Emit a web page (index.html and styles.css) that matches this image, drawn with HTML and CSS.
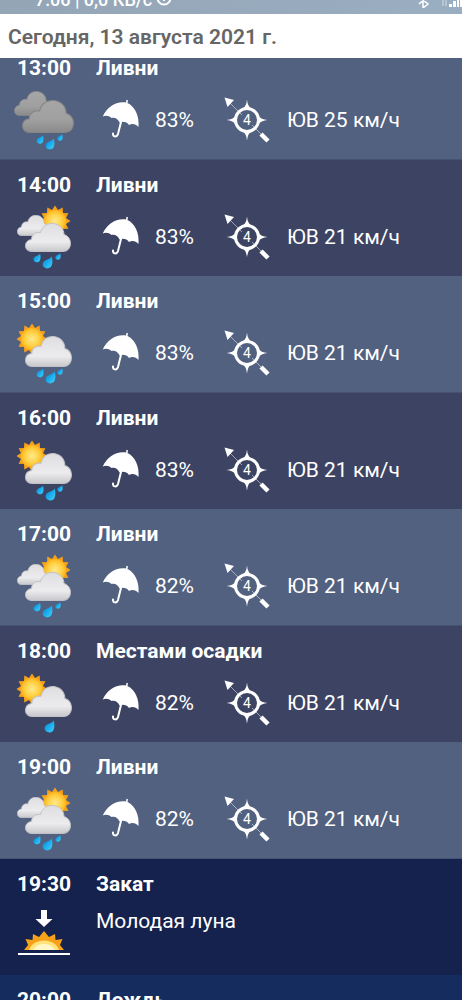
FILE: index.html
```html
<!DOCTYPE html>
<html lang="ru">
<head>
    <meta charset="UTF-8">
    <meta name="viewport" content="width=device-width, initial-scale=1.0">
    <title>Почасовой прогноз</title>
    <link rel="stylesheet" href="styles.css">
</head>
<body>

    <svg class="sprite" aria-hidden="true">
        <defs>
            <linearGradient id="cloudFill" x1="0" y1="0" x2="0" y2="1">
                <stop offset="0" stop-color="#dedee1"/>
                <stop offset="0.65" stop-color="#ececee"/>
                <stop offset="1" stop-color="#c8c8cc"/>
            </linearGradient>
            <linearGradient id="greyFill" x1="0" y1="0" x2="0" y2="1">
                <stop offset="0" stop-color="#a6a6a6"/>
                <stop offset="0.6" stop-color="#a0a0a0"/>
                <stop offset="1" stop-color="#8a8a8a"/>
            </linearGradient>
            <radialGradient id="sunFill">
                <stop offset="0" stop-color="#ffe98c"/>
                <stop offset="0.6" stop-color="#ffd34a"/>
                <stop offset="1" stop-color="#fdb51c"/>
            </radialGradient>
            <linearGradient id="dropFill" x1="0" y1="0" x2="1" y2="1">
                <stop offset="0" stop-color="#1272b4"/>
                <stop offset="0.4" stop-color="#13a5ea"/>
                <stop offset="1" stop-color="#45d2fb"/>
            </linearGradient>
        </defs>
        <symbol id="cloud" viewBox="0 0 46 30" preserveAspectRatio="none">
            <path d="M7 29.5C3 29.5 .5 27 .5 23.5C.5 20 3 17.500 6.500 17C6.500 12 11 9 15.500 10C17 4 21 .5 27 .5C34 .5 39 5.500 39 12C43 13 45.500 17 45.500 21C45.500 26 42.500 29.500 38 29.500Z"/>
        </symbol>
        <symbol id="sun" viewBox="-16 -16 32 32">
            <path fill="#f7a11b" d="M0-15.500L3-11L7.700-13.400L8-8L13.400-7.700L11-3L15.500 0L11 3L13.400 7.700L8 8L7.700 13.400L3 11L0 15.500L-3 11L-7.700 13.400L-8 8L-13.400 7.700L-11 3L-15.500 0L-11-3L-13.400-7.700L-8-8L-7.700-13.400L-3-11Z"/>
            <circle r="11" fill="url(#sunFill)"/>
        </symbol>
        <symbol id="drop" viewBox="0 0 12 14">
            <path fill="url(#dropFill)" d="M10.500 .5C12 5 11.500 9 10 11.500C8 14 4 14 2 12C0 9.500 .5 6.500 3 5C6 3.500 9 3 10.500 .5Z"/>
        </symbol>

        <symbol id="dark-showers" viewBox="0 0 72 68">
            <use href="#cloud" class="cloud-grey" x="6" y="5" width="38" height="25"/>
            <use href="#cloud" class="cloud-grey" x="14" y="14" width="52" height="33"/>
            <use href="#drop" x="28" y="49" width="8" height="9"/>
            <use href="#drop" x="37" y="52" width="10" height="12"/>
            <use href="#drop" x="49" y="48" width="6" height="7"/>
        </symbol>
        <symbol id="cloudy-showers" viewBox="0 0 72 68">
            <use href="#sun" x="31" y="2" width="32" height="32"/>
            <use href="#cloud" class="cloud-white" x="9" y="12" width="32" height="21"/>
            <use href="#cloud" class="cloud-white" x="17" y="20" width="46" height="29"/>
            <use href="#drop" x="25" y="50" width="8" height="10"/>
            <use href="#drop" x="34" y="53" width="11" height="13"/>
            <use href="#drop" x="47" y="50" width="6" height="7"/>
        </symbol>
        <symbol id="sunny-showers" viewBox="0 0 72 68">
            <use href="#sun" x="8" y="4" width="32" height="32"/>
            <use href="#cloud" class="cloud-white" x="17" y="17" width="47" height="31"/>
            <use href="#drop" x="28" y="49" width="8" height="10"/>
            <use href="#drop" x="37" y="52" width="11" height="13"/>
            <use href="#drop" x="49" y="49" width="6" height="7"/>
        </symbol>
        <symbol id="sunny-drizzle" viewBox="0 0 72 68">
            <use href="#sun" x="8" y="4" width="32" height="32"/>
            <use href="#cloud" class="cloud-white" x="17" y="17" width="47" height="31"/>
            <use href="#drop" x="36" y="51" width="11" height="13"/>
        </symbol>
        <symbol id="sunset" viewBox="0 0 72 68">
            <path fill="#fff" d="M33 8h6v9h5.500L36 25L27.500 17h5.500z"/>
            <path fill="#f7a11b" d="M16 48L20 43L17.500 37L24.500 38L25 32L31 35L36 29L41 35L47 32L47.500 38L54.500 37L52 43L56 48Z"/>
            <path fill="#ffe27a" d="M21 48C23 42 29 38.500 36 38.500S49 42 51 48Z"/>
            <path fill="#fff7c8" d="M25 48C27 44 31 42 36 42S45 44 47 48Z"/>
            <path fill="#fff" d="M10 51h52v2H10z"/>
        </symbol>

        <symbol id="umbrella" viewBox="0 0 40 42">
            <path fill="#fff" d="M25 3.500L25.500 .8L27 1.200L26.500 4C34 7.500 38.500 17 37.500 28C35 25 31 24 28 26C26 23 22 22 18.500 23.500C17 19.500 13.500 18 10.500 19C8 16.500 4.500 16 1.700 17.500C6 8 15 2 25 3.500Z"/>
            <path fill="none" stroke="#fff" stroke-width="2" stroke-linecap="round" d="M20.500 21L17 35C16 38.500 11.500 38 12 34.500"/>
        </symbol>
        <symbol id="compass" viewBox="0 0 48 48">
            <circle cx="24" cy="24" r="11.500" fill="none" stroke="#fff" stroke-width="3"/>
            <path fill="#fff" d="M24 3.500Q24.500 10 28.500 13H19.500Q23.500 10 24 3.500ZM24 44.500Q24.500 38 28.500 35H19.500Q23.500 38 24 44.500ZM3.500 24Q10 23.500 13 19.500V28.500Q10 24.500 3.500 24ZM44.500 24Q38 23.500 35 19.500V28.500Q38 24.500 44.500 24Z"/>
            <path stroke="#fff" stroke-width="1" opacity=".5" d="M5 5L19 19M29 29L38 38"/>
            <path fill="#fff" d="M1.500 1.500L11 4L4.500 11Z"/>
            <path stroke="#fff" stroke-width="4.500" d="M38 38L45 45"/>
        </symbol>
    </svg>

    <div class="screen">
        <div class="status-bar">
            <span class="status-text">7:06 | 0,0 КБ/с</span>
            <svg class="status-eye" viewBox="0 0 16 16"><circle cx="8" cy="8" r="6.500"/><path d="M5 7l3 3l3-3"/></svg>
            <svg class="status-signal" viewBox="0 0 46 16">
                <path fill="none" stroke="#fff" stroke-width="1.500" d="M3 5L12 12L7 16V1L12 4L3 12"/>
                <path fill="none" stroke="#fff" stroke-width="1" opacity=".6" d="M27 4V14M30 4V14"/>
                <path fill="#fff" d="M33 15V12h3v3zM37 15V9h3v6zM41 15V6h2v9zM44 15V2h2v13z"/>
            </svg>
        </div>

        <h1 class="date">Сегодня, 13 августа 2021 г.</h1>

        <ul class="forecast">
            <li class="hour">
                <time class="time">13:00</time>
                <h2 class="title">Ливни</h2>
                <svg class="weather"><use href="#dark-showers"/></svg>
                <div class="details">
                    <svg class="umbrella"><use href="#umbrella"/></svg>
                    <span class="chance">83%</span>
                    <span class="compass"><svg><use href="#compass"/></svg><b>4</b></span>
                    <span class="wind">ЮВ 25 км/ч</span>
                </div>
            </li>
            <li class="hour">
                <time class="time">14:00</time>
                <h2 class="title">Ливни</h2>
                <svg class="weather"><use href="#cloudy-showers"/></svg>
                <div class="details">
                    <svg class="umbrella"><use href="#umbrella"/></svg>
                    <span class="chance">83%</span>
                    <span class="compass"><svg><use href="#compass"/></svg><b>4</b></span>
                    <span class="wind">ЮВ 21 км/ч</span>
                </div>
            </li>
            <li class="hour">
                <time class="time">15:00</time>
                <h2 class="title">Ливни</h2>
                <svg class="weather"><use href="#sunny-showers"/></svg>
                <div class="details">
                    <svg class="umbrella"><use href="#umbrella"/></svg>
                    <span class="chance">83%</span>
                    <span class="compass"><svg><use href="#compass"/></svg><b>4</b></span>
                    <span class="wind">ЮВ 21 км/ч</span>
                </div>
            </li>
            <li class="hour">
                <time class="time">16:00</time>
                <h2 class="title">Ливни</h2>
                <svg class="weather"><use href="#sunny-showers"/></svg>
                <div class="details">
                    <svg class="umbrella"><use href="#umbrella"/></svg>
                    <span class="chance">83%</span>
                    <span class="compass"><svg><use href="#compass"/></svg><b>4</b></span>
                    <span class="wind">ЮВ 21 км/ч</span>
                </div>
            </li>
            <li class="hour">
                <time class="time">17:00</time>
                <h2 class="title">Ливни</h2>
                <svg class="weather"><use href="#cloudy-showers"/></svg>
                <div class="details">
                    <svg class="umbrella"><use href="#umbrella"/></svg>
                    <span class="chance">82%</span>
                    <span class="compass"><svg><use href="#compass"/></svg><b>4</b></span>
                    <span class="wind">ЮВ 21 км/ч</span>
                </div>
            </li>
            <li class="hour">
                <time class="time">18:00</time>
                <h2 class="title">Местами осадки</h2>
                <svg class="weather"><use href="#sunny-drizzle"/></svg>
                <div class="details">
                    <svg class="umbrella"><use href="#umbrella"/></svg>
                    <span class="chance">82%</span>
                    <span class="compass"><svg><use href="#compass"/></svg><b>4</b></span>
                    <span class="wind">ЮВ 21 км/ч</span>
                </div>
            </li>
            <li class="hour">
                <time class="time">19:00</time>
                <h2 class="title">Ливни</h2>
                <svg class="weather"><use href="#cloudy-showers"/></svg>
                <div class="details">
                    <svg class="umbrella"><use href="#umbrella"/></svg>
                    <span class="chance">82%</span>
                    <span class="compass"><svg><use href="#compass"/></svg><b>4</b></span>
                    <span class="wind">ЮВ 21 км/ч</span>
                </div>
            </li>
            <li class="hour sunset">
                <time class="time">19:30</time>
                <h2 class="title">Закат</h2>
                <svg class="weather"><use href="#sunset"/></svg>
                <p class="moon">Молодая луна</p>
            </li>
            <li class="hour night">
                <time class="time">20:00</time>
                <h2 class="title">Дождь</h2>
            </li>
        </ul>
    </div>

</body>
</html>
```
FILE: styles.css
```css
* {
    box-sizing: border-box;
}
body {
    margin: 0;
    font-family: Roboto, "Noto Sans", sans-serif;
    font-size: 21px;
    color: #fff;
    background-color: #14224d;
}
h1, h2, p, ul {
    margin: 0;
    padding: 0;
}
.sprite {
    position: absolute;
    width: 0;
    height: 0;
}
.screen {
    display: flex;
    flex-direction: column;
    height: 100vh;
    overflow: hidden;
}

/* the top of the phone's bar is off screen */
.status-bar {
    display: flex;
    align-items: flex-end;
    flex: none;
    height: 14px;
    padding-left: 35px;
    overflow: hidden;
    background: linear-gradient(90deg, #94a5b6, #9aaec2);
}
.status-text {
    margin-bottom: 2px;
    font-size: 18px;
    font-weight: 500;
    line-height: 24px;
}
.status-eye {
    width: 16px;
    height: 16px;
    margin: 0 auto 8px 4px;
    fill: none;
    stroke: #fff;
    stroke-width: 2;
}
.status-signal {
    flex: none;
    width: 46px;
    height: 16px;
    margin-bottom: 6px;
}
.date {
    flex: none;
    padding: 2px 0 0 8px;
    font-size: 21px;
    font-weight: 600;
    line-height: 42px;
    color: #666;
    background-color: #fff;
}

.forecast {
    flex: 1;
    overflow: hidden;
    list-style: none;
}
.hour {
    display: grid;
    grid-template-columns: 88px 1fr;
    grid-template-rows: 43px 68px;
    column-gap: 8px;
    padding-bottom: 5px;
    background-color: #3d4463;
}
.hour:nth-child(odd) {
    background-color: #52617f;
    border-bottom: 1px solid #465270;
}
/* list is scrolled a little under the date */
.hour:first-child {
    margin-top: -15px;
}
.hour.sunset {
    background-color: #14224d;
}
.hour.night {
    background-color: #152c5e;
}
.time, .title {
    padding-top: 13px;
    font-size: 21px;
    font-weight: 700;
    line-height: 24px;
}
.time {
    text-align: center;
}
.weather {
    width: 72px;
    height: 68px;
    margin-left: 8px;
}
.cloud-white {
    fill: url(#cloudFill);
    stroke: #c2c2c8;
}
.cloud-grey {
    fill: url(#greyFill);
    stroke: #868686;
}
.details {
    display: grid;
    grid-template-columns: 54px 68px 64px 1fr;
    align-items: center;
    padding-left: 5px;
}
.umbrella {
    width: 40px;
    height: 42px;
}
.compass {
    display: grid;
    place-items: center;
    width: 48px;
    height: 48px;
}
.compass svg, .compass b {
    grid-area: 1 / 1;
}
.compass svg {
    width: 48px;
    height: 48px;
}
.compass b {
    font-size: 14px;
    font-weight: 400;
    line-height: 16px;
}
.wind {
    white-space: nowrap;
}
.moon {
    padding-top: 5px;
    line-height: 28px;
}
```
